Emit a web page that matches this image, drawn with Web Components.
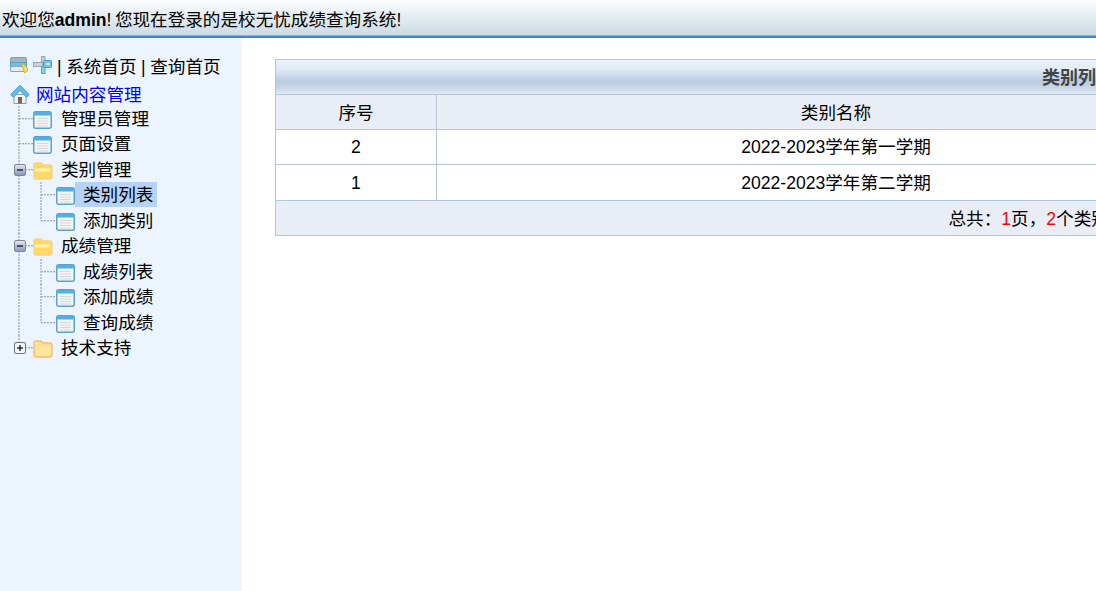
<!DOCTYPE html>
<html lang="zh-CN">
<head>
<meta charset="utf-8">
<title>类别列表</title>
<style>
  html, body { margin: 0; height: 100%; overflow: hidden; background: #fff; }
  body { font: 17.6px "Liberation Sans", "Noto Sans CJK SC", sans-serif; color: #000; }
</style>
</head>
<body>
<admin-page>
  <top-bar slot="top">欢迎您<b>admin</b>! 您现在登录的是校无忧成绩查询系统!</top-bar>
  <side-menu slot="side">
    <menu-row kind="home" tone="link">网站内容管理</menu-row>
    <menu-row level="1" kind="page">管理员管理</menu-row>
    <menu-row level="1" kind="page">页面设置</menu-row>
    <menu-row level="1" kind="open" toggle="minus">类别管理</menu-row>
    <menu-row level="2" kind="page" selected>类别列表</menu-row>
    <menu-row level="2" kind="page" end>添加类别</menu-row>
    <menu-row level="1" kind="open" toggle="minus">成绩管理</menu-row>
    <menu-row level="2" kind="page">成绩列表</menu-row>
    <menu-row level="2" kind="page">添加成绩</menu-row>
    <menu-row level="2" kind="page" end>查询成绩</menu-row>
    <menu-row level="1" kind="closed" toggle="plus" end>技术支持</menu-row>
  </side-menu>
  <list-panel heading="类别列表">
    <list-row tone="head"><span>序号</span><span>类别名称</span></list-row>
    <list-row><span>2</span><span>2022-2023学年第一学期</span></list-row>
    <list-row tall><span>1</span><span>2022-2023学年第二学期</span></list-row>
    <list-foot>总共<i>：</i><em>1</em>页<i>，</i><em>2</em>个类别</list-foot>
  </list-panel>
</admin-page>

<script>
class AdminPage extends HTMLElement {
  constructor() {
    super();
    this.attachShadow({ mode: 'open' });
    this.shadowRoot.innerHTML = `
      <style>
        :host { display: grid; grid-template: 38px 1fr / 242px 1fr; height: 591px; width: 1096px; overflow: hidden; }
        .top { grid-column: 1 / 3; }
        main { padding: 21px 0 0 33px; overflow: hidden; }
      </style>
      <div class="top"><slot name="top"></slot></div>
      <slot name="side"></slot>
      <main><slot></slot></main>`;
  }
}

class TopBar extends HTMLElement {
  constructor() {
    super();
    this.attachShadow({ mode: 'open' });
    this.shadowRoot.innerHTML = `
      <style>
        :host {
          display: block; box-sizing: border-box; height: 38px; padding-left: 2px; line-height: 41px;
          background: linear-gradient(#fbfdfe, #ccdbe6 35px, #86b3dd 35px, #86b3dd 36px);
          border-bottom: 2px solid #3f86c9; white-space: nowrap; word-spacing: -1.500px;
        }
      </style>
      <slot></slot>`;
  }
}

class SideMenu extends HTMLElement {
  constructor() {
    super();
    this.attachShadow({ mode: 'open' });
    this.shadowRoot.innerHTML = `
      <style>
        :host { display: block; background: #ebf4ff; padding: 17px 0 0 10px; }
        nav { display: flex; align-items: center; height: 24px; margin: -2px 0 5px; white-space: nowrap; }
        svg { display: block; flex: none; }
        .links { margin-left: 5px; word-spacing: -0.300px; }
        .gap { margin-left: 5px; }
      </style>
      <nav>
        <svg width="18" height="20" viewBox="0 0 18 20">
          <rect x="0.500" y="2.500" width="16" height="5" rx="1.500" fill="#a9b3ba" stroke="#8d99a1"/>
          <rect x="0.500" y="7.500" width="16" height="4" fill="#6fc0e6" stroke="#4ea4d2"/>
          <rect x="0.500" y="11.500" width="16" height="5" rx="1.500" fill="#e3e8ec" stroke="#9aa5ad"/>
          <path d="M11.500 7.500l6 5.500v3l-3 2z" fill="#f9e04f" stroke="#cfa92a" stroke-width="0.800"/>
        </svg>
        <svg class="gap" width="19" height="20" viewBox="0 0 19 20">
          <rect x="8.500" y="1.500" width="3.500" height="6" fill="#c2cdd5" stroke="#9aa9b4"/>
          <rect x="0.500" y="7.500" width="9" height="4" fill="#c9d3da" stroke="#9aa9b4"/>
          <rect x="8.500" y="11.500" width="3.500" height="7" fill="#8ed0f0" stroke="#4ea4d2"/>
          <rect x="10.500" y="5.500" width="8" height="7" rx="1" fill="#74c4ec" stroke="#3f9ad0"/>
          <rect x="13.500" y="8" width="3" height="2" fill="#e4f4fc"/>
        </svg>
        <span class="links">| 系统首页 | 查询首页</span>
      </nav>
      <slot></slot>`;
  }
}

const PAGE_ICON = `
  <rect x="0.750" y="0.750" width="17.500" height="16.500" rx="2" fill="#f3f4f4" stroke="#5ba3cf" stroke-width="1.500"/>
  <rect x="1" y="1" width="17" height="3.500" rx="1.500" fill="#52afe3"/>
  <path d="M4 7.500h11M4 10h11M4 12.500h11M4 15h11" stroke="#d5d8da"/>`;
const FOLDER_CLOSED = `
  <path d="M1 3q0-2 2-2h5l2 2h7q2 0 2 2v10q0 2-2 2H3q-2 0-2-2z" fill="#fee79b" stroke="#f8bb6c" stroke-width="1.400"/>
  <path d="M2 5h15" stroke="#fbd27f"/>`;
const FOLDER_OPEN = `
  <path d="M1 3q0-2 2-2h5l2 2h7q2 0 2 2v10q0 2-2 2H3q-2 0-2-2z" fill="#ffd966" stroke="#fccf86" stroke-width="1.400"/>
  <path d="M2 8h15" stroke="#fff2b0" stroke-width="3"/>`;
const HOME_ICON = `
  <path d="M4 10.500h12v9H4z" fill="#f4f1ea" stroke="#9a9a96"/>
  <rect x="8" y="13" width="4" height="6.500" fill="#6f6a62"/>
  <path d="M0.800 10.500L10 1.200l9.200 9.300-2.500 2.800L10 6.500 3.300 13.300z" fill="#62bdee" stroke="#4aa0d4"/>`;

class MenuRow extends HTMLElement {
  constructor() {
    super();
    this.attachShadow({ mode: 'open' });
  }

  connectedCallback() {
    const level = Number(this.getAttribute('level') || 0);
    const kind = this.getAttribute('kind');
    const toggle = this.getAttribute('toggle');
    const end = this.hasAttribute('end');
    // the svg holds the tree lines and the icon, drawn in page x so they line up between rows
    const width = level === 2 ? 65 : level === 1 ? 43 : 21;
    const h = level ? 25.5 : 23.5;
    const mid = h / 2;
    let art = '';
    if (level === 1) {
      art += `<line class="dots" x1="19" x2="19" y1="0" y2="${end ? mid - 6 : h}"/>`;
      art += toggle ? `<line class="dots" x1="25" x2="33" y1="${mid}" y2="${mid}"/>`
                    : `<line class="dots" x1="19" x2="33" y1="${mid}" y2="${mid}"/>`;
    }
    if (level === 2) {
      art += `<line class="dots" x1="19" x2="19" y1="0" y2="${h}"/>`;
      art += `<line class="dots" x1="41" x2="41" y1="0" y2="${end ? mid : h}"/>`;
      art += `<line class="dots" x1="41" x2="56" y1="${mid}" y2="${mid}"/>`;
    }
    if (toggle) {
      const cy = Math.round(mid);
      const fill = toggle === 'minus' ? 'url(#boxfill)' : '#f2f3f4';
      const edge = toggle === 'minus' ? '#7f8794' : '#6f7580';
      art += `<defs><linearGradient id="boxfill" x1="0" y1="0" x2="0" y2="1"><stop offset="0" stop-color="#e6eaf2"/><stop offset="1" stop-color="#8596b5"/></linearGradient></defs>`;
      art += `<rect x="14.500" y="${cy - 5.5}" width="11" height="11" rx="1.500" fill="${fill}" stroke="${edge}"/>`;
      art += `<path d="M17 ${cy}h6" stroke="#1c2230" stroke-width="1.400"/>`;
      if (toggle === 'plus') art += `<path d="M20 ${cy - 3}v6" stroke="#1c2230" stroke-width="1.400"/>`;
    }
    const ix = level === 2 ? 56 : 33;
    const iy = Math.round(mid - 9);
    if (kind === 'page') art += `<g transform="translate(${ix} ${iy + 1})">${PAGE_ICON}</g>`;
    if (kind === 'open') art += `<g transform="translate(${ix} ${iy + 1})">${FOLDER_OPEN}</g>`;
    if (kind === 'closed') art += `<g transform="translate(${ix} ${iy + 1})">${FOLDER_CLOSED}</g>`;
    if (kind === 'home') art += `<g transform="translate(10 2)">${HOME_ICON}</g>`;

    this.shadowRoot.innerHTML = `
      <style>
        :host { display: flex; align-items: center; height: ${h}px; white-space: nowrap; }
        :host([tone="link"]) { color: #00f; }
        svg { display: block; flex: none; overflow: visible; }
        .dots { stroke: #8f949a; stroke-dasharray: 2 1; fill: none; }
        .label { padding: 0 4px 0 ${level ? 8 : 5}px; height: 25px; line-height: ${level ? 26 : 28}px; }
        :host([selected]) .label { background: #b5d3f7; }
      </style>
      <svg width="${width}" height="${h}" viewBox="10 0 ${width} ${h}">${art}</svg>
      <span class="label"><slot></slot></span>`;
  }
}

class ListPanel extends HTMLElement {
  constructor() {
    super();
    this.attachShadow({ mode: 'open' });
    const heading = this.getAttribute('heading') || '';
    this.shadowRoot.innerHTML = `
      <style>
        :host { display: block; box-sizing: border-box; width: 1606px; border: 1px solid #b3c6dc; }
        h2 {
          margin: 0; height: 34px; line-height: 37px; text-align: center; font-size: 18px; font-weight: bold; color: #444;
          background: linear-gradient(#eaf2fa 0, #e3ecf5 25%, #b9cce2 62%, #c6d5e7 80%, #e2eaf3 100%);
          border-bottom: 1px solid #b3c6dc;
        }
      </style>
      <h2>${heading}</h2>
      <slot></slot>`;
  }
}

class ListRow extends HTMLElement {
  constructor() {
    super();
    this.attachShadow({ mode: 'open' });
    this.shadowRoot.innerHTML = `
      <style>
        :host {
          display: grid; grid-template-columns: 161px 798px 1fr; box-sizing: border-box; height: 35px;
          border-bottom: 1px solid #b3c6dc; text-align: center; line-height: 35px;
        }
        :host([tall]) { height: 36px; line-height: 36px; }
        :host([tone="head"]) { background: #e9eef6; line-height: 37px; }
        ::slotted(span:first-child) { border-right: 1px solid #b3c6dc; }
      </style>
      <slot></slot>`;
  }
}

class ListFoot extends HTMLElement {
  constructor() {
    super();
    this.attachShadow({ mode: 'open' });
    this.shadowRoot.innerHTML = `
      <style>
        :host { display: block; height: 34px; line-height: 37px; padding-left: 672.500px; background: #e9eef6; white-space: nowrap; color: #000; }
        ::slotted(em) { font-style: normal; color: #f00; }
        ::slotted(i) { font-style: normal; font-family: "Liberation Sans", "Noto Sans CJK TC", sans-serif; }
      </style>
      <slot></slot>`;
  }
}

customElements.define('admin-page', AdminPage);
customElements.define('top-bar', TopBar);
customElements.define('side-menu', SideMenu);
customElements.define('menu-row', MenuRow);
customElements.define('list-panel', ListPanel);
customElements.define('list-row', ListRow);
customElements.define('list-foot', ListFoot);
</script>
</body>
</html>
